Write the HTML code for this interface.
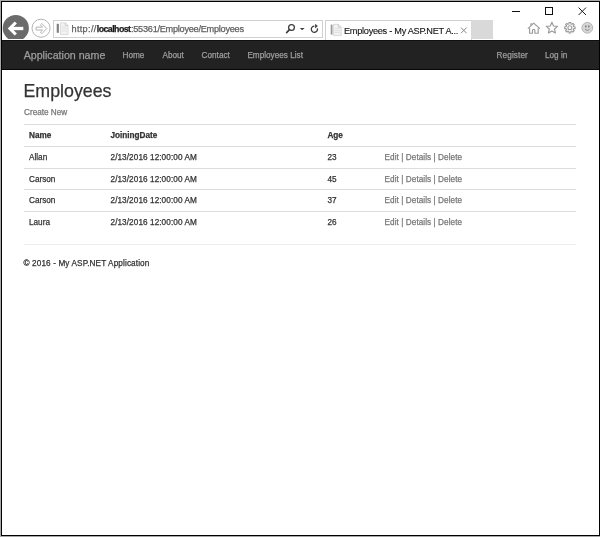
<!DOCTYPE html>
<html><head><meta charset="utf-8"><style>
html,body{margin:0;padding:0;}
body{width:600px;height:537px;position:relative;overflow:hidden;background:#fff;will-change:transform;font-family:"Liberation Sans",sans-serif;color:#333;}
.a{position:absolute;white-space:nowrap;line-height:1;}
.a,.nv,.td{-webkit-text-stroke-width:0.25px;}
.ln{position:absolute;left:24px;width:552px;height:1px;background:#ddd;}
.nv{position:absolute;top:52px;font-size:8.2px;color:#9d9d9d;line-height:1;white-space:nowrap;}
.td{position:absolute;font-size:8.2px;color:#333;line-height:1;white-space:nowrap;}
.th{font-weight:bold;}
.act{color:#777;letter-spacing:0.06px;margin-left:0.6px;}
</style></head><body>
<!-- outer frame -->
<div style="position:absolute;left:0;top:0;width:600px;height:1px;background:#a8a8a8"></div>
<div style="position:absolute;left:0;top:0;width:1px;height:537px;background:#a8a8a8"></div>
<div style="position:absolute;left:0;top:536px;width:600px;height:1px;background:#a8a8a8"></div>
<div style="position:absolute;left:1px;top:1px;width:599px;height:535px;box-sizing:border-box;border:1px solid #000"></div>

<!-- window controls -->
<div style="position:absolute;left:512px;top:11px;width:8px;height:1px;background:#111"></div>
<div style="position:absolute;left:545px;top:7px;width:8px;height:8px;box-sizing:border-box;border:1px solid #111"></div>
<svg style="position:absolute;left:578px;top:7px" width="9" height="9" viewBox="0 0 9 9"><path d="M0.6 0.6L8 8M8 0.6L0.6 8" stroke="#1a1a1a" stroke-width="1" fill="none"/></svg>

<!-- toolbar icons -->
<svg style="position:absolute;left:526px;top:20px" width="16" height="16" viewBox="0 0 16 16">
  <path d="M2.2 8.4L7.7 3.1L13.6 8.4" fill="none" stroke="#9a9a9a" stroke-width="1.15" stroke-linecap="round" stroke-linejoin="round"/>
  <path d="M4.7 5.6V3.7H5.9V4.5" fill="none" stroke="#a4a4a4" stroke-width="0.9"/>
  <path d="M3.6 8.2V13.2H6.5V10.4A1.2 1.2 0 0 1 8.9 10.4V13.2H12.2V8.2" fill="none" stroke="#9a9a9a" stroke-width="1.15" stroke-linejoin="round"/>
</svg>
<svg style="position:absolute;left:544px;top:20px" width="16" height="16" viewBox="0 0 16 16">
  <path d="M7.90 2.30 L9.52 5.98 L13.51 6.38 L10.52 9.05 L11.37 12.97 L7.90 10.95 L4.43 12.97 L5.28 9.05 L2.29 6.38 L6.28 5.98Z" fill="none" stroke="#9a9a9a" stroke-width="1.15" stroke-linejoin="round"/>
</svg>
<svg style="position:absolute;left:562px;top:20px" width="16" height="16" viewBox="0 0 16 16">
  <path d="M6.89 2.50 L8.91 2.50 L8.81 3.91 L9.94 4.37 L10.86 3.31 L12.29 4.74 L11.23 5.66 L11.69 6.79 L13.10 6.69 L13.10 8.71 L11.69 8.61 L11.23 9.74 L12.29 10.66 L10.86 12.09 L9.94 11.03 L8.81 11.49 L8.91 12.90 L6.89 12.90 L6.99 11.49 L5.86 11.03 L4.94 12.09 L3.51 10.66 L4.57 9.74 L4.11 8.61 L2.70 8.71 L2.70 6.69 L4.11 6.79 L4.57 5.66 L3.51 4.74 L4.94 3.31 L5.86 4.37 L6.99 3.91Z" fill="none" stroke="#9a9a9a" stroke-width="1.05" stroke-linejoin="round"/>
  <circle cx="7.9" cy="7.7" r="2" fill="none" stroke="#9a9a9a" stroke-width="1.05"/>
</svg>
<svg style="position:absolute;left:579px;top:20px" width="16" height="16" viewBox="0 0 16 16">
  <circle cx="8.3" cy="7.8" r="5.4" fill="#d6d6d6" stroke="#b0b0b0" stroke-width="0.9"/>
  <rect x="6.1" y="5.4" width="1.4" height="2" fill="#7a7a7a"/>
  <rect x="9.1" y="5.4" width="1.4" height="2" fill="#7a7a7a"/>
  <path d="M6.1 9.3Q8.25 11.6 10.4 9.3" fill="none" stroke="#8a8a8a" stroke-width="1"/>
</svg>

<!-- back button -->
<svg style="position:absolute;left:2px;top:14px" width="28" height="25" viewBox="0 0 28 25">
  <circle cx="13.8" cy="14.1" r="13.1" fill="#6b6b6b"/>
  <path d="M13.8 8.5L7.9 14.5L13.8 20.5" stroke="#fff" stroke-width="3.1" fill="none" stroke-linecap="butt" stroke-linejoin="miter"/>
  <path d="M8.5 14.5H21.3" stroke="#fff" stroke-width="3.3" fill="none"/>
</svg>
<!-- forward button -->
<svg style="position:absolute;left:30px;top:18px" width="22" height="22" viewBox="0 0 22 22">
  <circle cx="11.05" cy="10.2" r="9.05" fill="none" stroke="#b4b4b4" stroke-width="1"/>
  <path d="M6.1 9.1H12.6L10.4 6.9L11.8 5.5L16.8 10.55L11.8 15.6L10.4 14.2L12.6 12H6.1Z" fill="none" stroke="#a8a8a8" stroke-width="0.85" stroke-linejoin="miter"/>
</svg>

<!-- address bar -->
<div style="position:absolute;left:53px;top:20px;width:270px;height:17.5px;box-sizing:border-box;border:1px solid #d0d0d0"></div>
<svg style="position:absolute;left:54px;top:21px" width="16" height="16" viewBox="0 0 16 16">
  <rect x="2.7" y="2.8" width="2.2" height="9" fill="#808080"/>
  <path d="M6.5 1.8H11.5L14 4.3V13.6H6.5Z" fill="#f3f3f3" stroke="#d4d4d4" stroke-width="0.8"/>
  <path d="M11.3 1.8V4.5H14" fill="none" stroke="#c8c8c8" stroke-width="0.8"/>
  <path d="M7.8 6H12.8M7.8 8H12.8M7.8 10H12.8" stroke="#dcdcdc" stroke-width="0.7"/>
</svg>
<div class="a" style="left:71.5px;top:24.9px;font-size:9.2px;color:#5f5f5f;letter-spacing:0.3px">http://</div>
<div class="a" style="left:96.8px;top:25.1px;font-size:8.8px;font-weight:bold;color:#1a1a1a;letter-spacing:-0.55px">localhost</div>
<div class="a" style="left:131px;top:24.9px;font-size:9.2px;color:#5f5f5f;letter-spacing:-0.27px">:55361/Employee/Employees</div>

<svg style="position:absolute;left:282px;top:20px" width="40" height="17" viewBox="0 0 40 17">
  <circle cx="9.5" cy="7.5" r="2.9" fill="none" stroke="#3c3c3c" stroke-width="1.25"/>
  <path d="M7.5 9.6L4.6 12.6" stroke="#3c3c3c" stroke-width="1.6" stroke-linecap="round"/>
  <path d="M17.8 8H22.6L20.2 10.3Z" fill="#3c3c3c"/>
  <path d="M32.4 6.1A3.1 3.1 0 1 0 35.4 8.4" fill="none" stroke="#3c3c3c" stroke-width="1.3"/>
  <path d="M33.1 3.7L35.8 6.1L33.1 8.5Z" fill="#3c3c3c"/>
</svg>

<!-- tab -->
<div style="position:absolute;left:325px;top:20px;width:147px;height:20px;box-sizing:border-box;border:1px solid #d0d0d0;border-bottom:none"></div>
<svg style="position:absolute;left:329px;top:23px" width="14" height="14" viewBox="0 0 14 14">
  <rect x="1.7" y="1.6" width="1.8" height="10" fill="#9a9a9a"/>
  <path d="M4.6 1.3H9.5L12.2 4V12.6H4.6Z" fill="#f3f3f3" stroke="#d0d0d0" stroke-width="0.8"/>
  <path d="M9.3 1.3V4.2H12.2" fill="none" stroke="#c4c4c4" stroke-width="0.8"/>
  <path d="M5.8 5.6H11M5.8 7.6H11M5.8 9.6H11" stroke="#dadada" stroke-width="0.7"/>
</svg>
<div class="a" style="left:344px;top:26.6px;font-size:9.2px;color:#111;letter-spacing:-0.28px;-webkit-text-stroke-width:0.1px">Employees - My ASP.NET A...</div>
<svg style="position:absolute;left:460px;top:27px" width="8" height="7" viewBox="0 0 8 7"><path d="M1 0.6L6.6 6.2M6.6 0.6L1 6.2" stroke="#8a8a8a" stroke-width="1"/></svg>
<div style="position:absolute;left:471px;top:20px;width:22px;height:19px;background:#d9d9d9"></div>

<!-- navbar -->
<div style="position:absolute;left:2px;top:40px;width:597px;height:30px;background:#222;border-bottom:0px solid #080808"></div>
<div style="position:absolute;left:2px;top:69px;width:597px;height:1px;background:#080808"></div>
<div style="position:absolute;left:2px;top:40px;width:597px;height:1px;background:#101010"></div>
<div class="a" style="left:23.7px;top:50px;font-size:10.65px;color:#9d9d9d">Application name</div>
<div class="nv" style="left:122.5px">Home</div>
<div class="nv" style="left:162.5px">About</div>
<div class="nv" style="left:201.6px">Contact</div>
<div class="nv" style="left:247.4px">Employees List</div>
<div class="nv" style="left:496.6px;letter-spacing:0.1px">Register</div>
<div class="nv" style="left:545px">Log in</div>

<!-- content -->
<div class="a" style="left:23.5px;top:83.2px;font-size:17.8px;color:#333">Employees</div>
<div class="a" style="left:24px;top:109px;font-size:8.2px;color:#777">Create New</div>

<div class="ln" style="top:124px"></div>
<div class="ln" style="top:146px"></div>
<div class="ln" style="top:168px"></div>
<div class="ln" style="top:189px"></div>
<div class="ln" style="top:211px"></div>

<div class="td th" style="left:29px;top:132px">Name</div>
<div class="td th" style="left:110.5px;top:132px">JoiningDate</div>
<div class="td th" style="left:327.4px;top:132px">Age</div>

<div class="td" style="left:29px;top:154px">Allan</div>
<div class="td" style="left:110.5px;top:154px;letter-spacing:0.08px">2/13/2016 12:00:00 AM</div>
<div class="td" style="left:327.4px;top:154px">23</div>
<div class="td act" style="left:384px;top:154px">Edit | Details | Delete</div>

<div class="td" style="left:29px;top:176px">Carson</div>
<div class="td" style="left:110.5px;top:176px;letter-spacing:0.08px">2/13/2016 12:00:00 AM</div>
<div class="td" style="left:327.4px;top:176px">45</div>
<div class="td act" style="left:384px;top:176px">Edit | Details | Delete</div>

<div class="td" style="left:29px;top:197px">Carson</div>
<div class="td" style="left:110.5px;top:197px;letter-spacing:0.08px">2/13/2016 12:00:00 AM</div>
<div class="td" style="left:327.4px;top:197px">37</div>
<div class="td act" style="left:384px;top:197px">Edit | Details | Delete</div>

<div class="td" style="left:29px;top:219px">Laura</div>
<div class="td" style="left:110.5px;top:219px;letter-spacing:0.08px">2/13/2016 12:00:00 AM</div>
<div class="td" style="left:327.4px;top:219px">26</div>
<div class="td act" style="left:384px;top:219px">Edit | Details | Delete</div>

<div class="ln" style="top:244px;background:#eee"></div>
<div class="a" style="left:23.5px;top:259.7px;font-size:8.2px;color:#333;letter-spacing:0.12px">&copy; 2016 - My ASP.NET Application</div>

</body></html>
